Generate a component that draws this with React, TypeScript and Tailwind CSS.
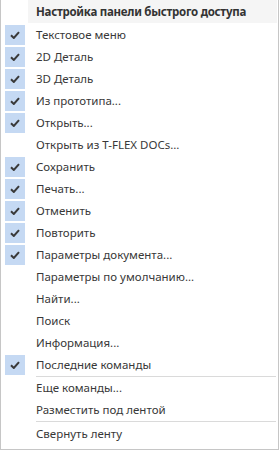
import React from 'react';

const items: { label: string; checked: boolean }[] = [
  { label: 'Текстовое меню', checked: true },
  { label: '2D Деталь', checked: true },
  { label: '3D Деталь', checked: true },
  { label: 'Из прототипа...', checked: true },
  { label: 'Открыть...', checked: true },
  { label: 'Открыть из T-FLEX DOCs...', checked: false },
  { label: 'Сохранить', checked: true },
  { label: 'Печать...', checked: true },
  { label: 'Отменить', checked: true },
  { label: 'Повторить', checked: true },
  { label: 'Параметры документа...', checked: true },
  { label: 'Параметры по умолчанию...', checked: false },
  { label: 'Найти...', checked: false },
  { label: 'Поиск', checked: false },
  { label: 'Информация...', checked: false },
  { label: 'Последние команды', checked: true },
];

const Check = () => (
  <svg width="10" height="8" viewBox="0 0 10 8">
    <path d="M1 4.2 L3.8 7 L9 1.2" fill="none" stroke="#3a3a3a" strokeWidth="2" />
  </svg>
);

const Row = ({ label, checked }: { label: string; checked: boolean }) => (
  <div className="flex h-[22px] items-center">
    <div className="flex w-[35px] shrink-0 justify-start pl-[4px]">
      {checked ? (
        <div className="flex h-[20px] w-[20px] items-center justify-center bg-[#c5d9f3]">
          <Check />
        </div>
      ) : (
        <div className="h-[20px] w-[20px]" />
      )}
    </div>
    <span className="whitespace-nowrap text-[#383838]">{label}</span>
  </div>
);

const Separator = () => <div className="ml-[35px] mr-[2px] h-px bg-[#dadada]" />;

export default function App() {
  return (
    <div
      className="flex h-[450px] w-[279px] flex-col border-x border-b border-[#c6c6c6] bg-white text-[11.5px] leading-none"
      style={{ fontFamily: '"Noto Sans", "Open Sans", sans-serif' }}
    >
      <div className="ml-[27px] mr-[1px] flex h-[23px] items-center bg-[#f5f5f5] pl-[8px] font-bold tracking-[-0.27px] text-[#333]">
        Настройка панели быстрого доступа
      </div>
      <div className="h-px" />
      {items.map((it) => (
        <Row key={it.label} {...it} />
      ))}
      <Separator />
      <Row label="Еще команды..." checked={false} />
      <Row label="Разместить под лентой" checked={false} />
      <Separator />
      <div className="h-px" />
      <Row label="Свернуть ленту" checked={false} />
    </div>
  );
}
